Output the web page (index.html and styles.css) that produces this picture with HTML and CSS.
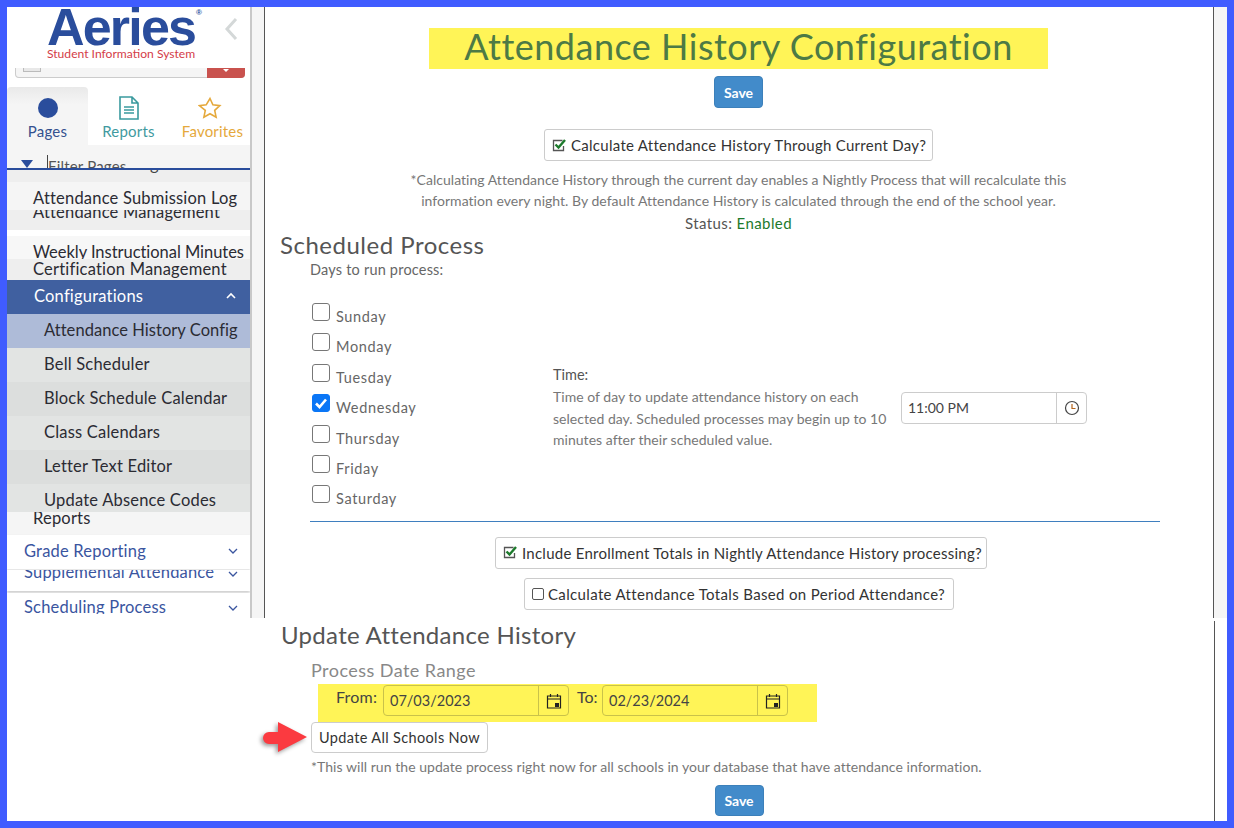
FILE: index.html
```html
<!DOCTYPE html>
<html lang="en">
<head>
<meta charset="utf-8">
<title>Attendance History Configuration</title>
<link rel="stylesheet" href="styles.css">
</head>
<body>
<div class="frame">
  <div class="upper">
    <aside class="sidebar">
      <div class="logo">
        <div class="logo-text">
          <div class="logo-name">Aeries<sup class="reg">®</sup></div>
          <div class="logo-sub">Student Information System</div>
        </div>
        <svg class="collapse" width="14" height="24" viewBox="0 0 14 24"><path d="M12 2 3 12l9 10" fill="none" stroke="#d4d8d8" stroke-width="3"/></svg>
      </div>
      <div class="school-select"><span class="select-chip"></span><span class="select-red"><i class="caret"></i></span></div>
      <div class="tabs">
        <div class="tab tab-pages"><span class="dot"></span><span>Pages</span></div>
        <div class="tab tab-reports">
          <svg width="22" height="24" viewBox="0 0 22 24"><path d="M2 1h12l6 6v16H2z M14 1v6h6" fill="none" stroke="#3a9a9e" stroke-width="1.6"/><path d="M6 11h10M6 14h10M6 17h10" stroke="#3a9a9e" stroke-width="1.6"/></svg>
          <span>Reports</span>
        </div>
        <div class="tab tab-fav">
          <svg width="24" height="24" viewBox="0 0 24 24"><path d="M12 2.5l2.9 6.3 6.9.8-5.1 4.7 1.4 6.8-6.1-3.4-6.1 3.4 1.4-6.8L1.300 9.600l6.900-.8z" fill="none" stroke="#e5a93c" stroke-width="1.600"/></svg>
          <span>Favorites</span>
        </div>
      </div>
      <div class="filter"><i class="tri"></i><span class="filter-text">Filter Pages</span></div>
      <div class="clip-g"><span>g</span></div>
      <div class="row sub-log">Attendance Submission Log</div>
      <div class="row sub-mgmt"><span>Attendance Management</span></div>
      <div class="row sub-week"><span>Weekly Instructional Minutes</span></div>
      <div class="row sub-cert">Certification Management</div>
      <div class="row config">Configurations
        <svg width="12" height="8" viewBox="0 0 12 8"><path d="M2 6l4-4 4 4" fill="none" stroke="#fff" stroke-width="1.600"/></svg>
      </div>
      <div class="row child current">Attendance History Config</div>
      <div class="row child odd">Bell Scheduler</div>
      <div class="row child even">Block Schedule Calendar</div>
      <div class="row child odd">Class Calendars</div>
      <div class="row child even">Letter Text Editor</div>
      <div class="row child odd last">Update Absence Codes</div>
      <div class="row sub-reports"><span>Reports</span></div>
      <div class="row group">Grade Reporting
        <svg width="12" height="8" viewBox="0 0 12 8"><path d="M2 2l4 4 4-4" fill="none" stroke="#3a559f" stroke-width="1.300"/></svg>
      </div>
      <div class="row group supp"><span>Supplemental Attendance</span>
        <svg width="12" height="8" viewBox="0 0 12 8"><path d="M2 2l4 4 4-4" fill="none" stroke="#3a559f" stroke-width="1.300"/></svg>
      </div>
      <div class="row group sched"><span>Scheduling Process</span>
        <svg width="12" height="8" viewBox="0 0 12 8"><path d="M2 2l4 4 4-4" fill="none" stroke="#3a559f" stroke-width="1.300"/></svg>
      </div>
    </aside>
    <main class="main">
      <div class="center">
        <h1 class="title">Attendance History Configuration</h1>
        <button class="btn-save">Save</button>
        <div class="check-btn calc">
          <svg class="ck" width="15" height="15" viewBox="0 0 15 15"><path d="M11.500 8v4.500h-10v-10h9" fill="none" stroke="#555" stroke-width="1.300"/><path d="M3.500 6.500l3 3 6.500-7.500" fill="none" stroke="#1d7a2c" stroke-width="2.400"/></svg>
          Calculate Attendance History Through Current Day?
        </div>
        <p class="note">*Calculating Attendance History through the current day enables a Nightly Process that will recalculate this<br>information every night. By default Attendance History is calculated through the end of the school year.</p>
        <p class="status">Status: <span class="enabled">Enabled</span></p>
      </div>
      <h2 class="h-sched">Scheduled Process</h2>
      <div class="days-label">Days to run process:</div>
      <div class="sched-row">
        <div class="days">
          <div class="day"><i class="box"></i>Sunday</div>
          <div class="day"><i class="box"></i>Monday</div>
          <div class="day"><i class="box"></i>Tuesday</div>
          <div class="day"><i class="box on"><svg width="18" height="18" viewBox="0 0 18 18"><path d="M4 9.500l3.500 3.500 6.500-7.500" fill="none" stroke="#fff" stroke-width="2.600"/></svg></i>Wednesday</div>
          <div class="day"><i class="box"></i>Thursday</div>
          <div class="day"><i class="box"></i>Friday</div>
          <div class="day"><i class="box"></i>Saturday</div>
        </div>
        <div class="time-text">
          <div class="time-label">Time:</div>
          <div class="time-desc">Time of day to update attendance history on each selected day. Scheduled processes may begin up to 10 minutes after their scheduled value.</div>
        </div>
        <div class="input time-input">
          <span class="input-val">11:00 PM</span>
          <span class="addon"><svg width="16" height="16" viewBox="0 0 16 16"><circle cx="8" cy="8" r="6.500" fill="none" stroke="#444" stroke-width="1.200"/><path d="M8 4v4.500h3.500" fill="none" stroke="#b5651d" stroke-width="1.200"/></svg></span>
        </div>
      </div>
      <hr class="rule">
      <div class="center">
        <div class="check-btn incl">
          <svg class="ck" width="15" height="15" viewBox="0 0 15 15"><path d="M11.500 8v4.500h-10v-10h9" fill="none" stroke="#555" stroke-width="1.300"/><path d="M3.500 6.500l3 3 6.500-7.500" fill="none" stroke="#1d7a2c" stroke-width="2.400"/></svg>
          Include Enrollment Totals in Nightly Attendance History processing?
        </div>
        <div class="check-btn period"><i class="mini-box"></i>Calculate Attendance Totals Based on Period Attendance?</div>
      </div>
    </main>
  </div>
  <section class="lower">
    <h2 class="h-update">Update Attendance History</h2>
    <div class="range-label">Process Date Range</div>
    <div class="range">
      <span class="from">From:</span>
      <div class="input date"><span class="input-val">07/03/2023</span><span class="addon"><svg width="16" height="16" viewBox="0 0 16 16"><path d="M1.500 3h13v12h-13zM1.500 6h13M4.500 1v3M11.500 1v3" fill="none" stroke="#222" stroke-width="1.200"/><rect x="9" y="10" width="4" height="4" fill="#222"/></svg></span></div>
      <span class="to">To:</span>
      <div class="input date"><span class="input-val">02/23/2024</span><span class="addon"><svg width="16" height="16" viewBox="0 0 16 16"><path d="M1.500 3h13v12h-13zM1.500 6h13M4.500 1v3M11.500 1v3" fill="none" stroke="#222" stroke-width="1.200"/><rect x="9" y="10" width="4" height="4" fill="#222"/></svg></span></div>
    </div>
    <div class="update-wrap">
      <svg class="arrow" width="46" height="32" viewBox="0 0 46 32"><path d="M7 10H16V0L45 15 16 30V22H7a6 6 0 0 1 0-12z" fill="#fb3a40"/></svg>
      <button class="btn-update">Update All Schools Now</button>
    </div>
    <p class="run-note">*This will run the update process right now for all schools in your database that have attendance information.</p>
    <div class="center"><button class="btn-save bottom">Save</button></div>
  </section>
</div>
</body>
</html>
```
FILE: styles.css
```css
* { box-sizing: border-box; }
html, body { margin: 0; padding: 0; }
body { font-family: Lato, "Open Sans", sans-serif; color: #333; background: #fff; }
.frame { width: 1234px; height: 828px; border: 7px solid #405cff; overflow: hidden; background: #fff; }
.upper { display: flex; height: 611px; background: #f5f5f5; }

.sidebar { width: 245px; flex: none; background: #fff; border-right: 2px solid #c8c8c8; overflow: hidden; font-size: 16.500px; letter-spacing: .2px; }
.logo { height: 61px; display: flex; position: relative; padding-left: 40px; overflow: hidden; }
.logo-name { font-family: "Liberation Sans", sans-serif; font-weight: 700; font-size: 52px; line-height: 40px; height: 39px; color: #2a4d9c; letter-spacing: -1.800px; position: relative; }
.reg { position: absolute; top: 2px; left: 149px; font-size: 8px; line-height: 8px; letter-spacing: 0; }
.logo-sub { font-size: 12.100px; line-height: 14px; color: #d43c48; letter-spacing: 0; margin-top: 1px; }
.collapse { margin: 10px 0 0 29px; }
.school-select { height: 10px; margin: 0 5px 0 8px; background: #f5f5f5; border: 1px solid #ccc; border-top: 0; border-radius: 0 0 4px 4px; display: flex; justify-content: space-between; position: relative; }
.select-chip { width: 18px; height: 4px; margin-left: 7px; background: #e8e8e8; border: 1px solid #bbb; border-top: 0; }
.select-red { width: 38px; height: 10px; margin: 0 -1px 0 0; background: #c9524e; border-radius: 0 0 4px 0; display: flex; justify-content: center; }
.caret { width: 0; height: 0; border: 3px solid transparent; border-top-color: #fff; border-bottom: 0; margin-top: 1px; }

.tabs { display: grid; grid-template-columns: 81px 81px 81px; height: 58px; margin-top: 9px; }
.tab { display: flex; flex-direction: column; align-items: center; justify-content: flex-end; gap: 5px; font-size: 15px; padding-bottom: 5px; letter-spacing: .2px; }
.tab-pages { background: linear-gradient(#e9e9e9, #f5f5f5 30%); border-radius: 4px 4px 0 0; color: #34518f; }
.dot { width: 20px; height: 20px; border-radius: 50%; background: #2a4d9c; margin-bottom: -1px; }
.tab-reports { color: #3f9aa0; }
.tab-reports svg { margin-bottom: -3px; }
.tab-fav { color: #e5a93c; }
.tab-fav svg { margin-bottom: -3px; }
.tab-fav span { margin-left: 6px; }

.filter { height: 25px; background: #f5f5f5; border-bottom: 2px solid #2a4d9c; display: flex; overflow: hidden; padding-left: 14px; }
.tri { width: 0; height: 0; border: 6px solid transparent; border-top: 8px solid #2a4d9c; border-bottom: 0; margin-top: 15px; }
.filter-text { border-left: 1px solid #444; height: 30px; margin: 10px 0 0 14px; line-height: 22px; font-size: 15px; color: #555; }
.clip-g { height: 12px; background: #eee; overflow: hidden; padding-left: 143px; color: #444; }
.clip-g span { display: block; line-height: 20px; margin-top: -16px; }

.row { display: flex; align-items: center; justify-content: space-between; color: #2b2b33; overflow: hidden; white-space: nowrap; }
.sub-log { height: 28px; padding: 4px 0 0 26px; background: #f5f5f5; }
.sub-mgmt { height: 20px; padding-left: 26px; background: #eee; align-items: flex-start; }
.sub-mgmt span { margin-top: -8px; }
.sub-week { height: 23px; padding: 0 0 0 26px; margin-top: 6px; background: #f7f7f7; align-items: flex-start; letter-spacing: -.04px; }
.sub-week span { margin-top: 6px; }
.sub-cert { height: 21px; padding: 0 0 2px 26px; background: #eee; }
.config { height: 34px; padding: 0 13px 2px 27px; background: #4060a0; color: #fff; }
.child { height: 34px; padding: 0 0 2px 37px; }
.current { background: #aebbd8; letter-spacing: .05px; }
.odd { background: #e2e4e3; }
.even { background: #dcdedd; }
.last { height: 28px; align-items: flex-start; padding-top: 6px; }
.sub-reports { height: 23px; padding-left: 26px; background: #f5f5f5; align-items: flex-start; }
.sub-reports span { margin-top: -4px; }
.group { height: 34px; padding: 0 11px 3px 17px; background: #fff; color: #3a559f; box-shadow: 0 1px 2px #ddd; position: relative; }
.supp { height: 21px; align-items: flex-start; margin-top: 1px; box-shadow: 0 2px 3px #ccc; }
.supp span { margin-top: -8px; }
.sched { height: 26px; margin-top: 2px; align-items: flex-start; box-shadow: none; border-bottom: 1px solid #ddd; }
.sched span { margin-top: 4px; height: 17px; overflow: hidden; }
.sched svg { margin-top: 11px; }

.main { flex: 1; margin: 0 13px 0 12px; background: #fff; border-left: 1px solid #555; border-right: 1px solid #555; padding: 21px 1px 0 0; font-size: 14px; min-width: 0; }
.center { display: flex; flex-direction: column; align-items: center; }
.title { width: 619px; height: 41px; margin: 0; background: #fff457; color: #4d7a45; font-size: 36px; font-weight: 400; line-height: 37px; text-align: center; letter-spacing: .5px; }
.btn-save { width: 49px; height: 32px; margin-top: 7px; padding: 0; background: #428bca; border: 1px solid #3c80ba; border-radius: 4px; color: #fff; font: 700 14px Lato, sans-serif; }
.check-btn { display: flex; align-items: center; gap: 4px; height: 32px; border: 1px solid #ccc; border-radius: 3px; background: #fff; font-size: 15px; color: #333; white-space: nowrap; letter-spacing: .28px; padding-left: 7px; }
.calc { width: 389px; margin-top: 21px; }
.note { margin: 8px 0 0; font-size: 14px; line-height: 21px; color: #777; text-align: center; letter-spacing: .03px; }
.status { margin: 0; font-size: 15px; line-height: 25px; color: #555; letter-spacing: .4px; }
.enabled { color: #1d7a2c; }
.h-sched { margin: -5px 0 0 15px; font-size: 24px; font-weight: 400; line-height: 28px; color: #555; letter-spacing: .5px; height: 28px; }
.days-label { margin: 0 0 0 45px; height: 46px; line-height: 22px; font-size: 14.500px; color: #666; letter-spacing: .2px; }
.sched-row { display: flex; align-items: flex-start; padding-left: 47px; }
.days { width: 241px; flex: none; padding-top: 1px; }
.day { display: flex; height: 30.400px; font-size: 14.500px; color: #666; letter-spacing: .65px; line-height: 18px; padding-top: 2px; }
.box { display: block; width: 18px; height: 18px; margin: 0 6px 0 0; border: 1px solid #777; border-radius: 3px; background: #fff; transform: translateY(-5px); }
.on { background: #0a76f6; border-color: #0a76f6; }
.on svg { display: block; margin: -1px; }
.time-text { width: 348px; flex: none; margin-top: 59px; }
.time-label { line-height: 22px; font-size: 14.500px; color: #555; }
.time-desc { width: 340px; line-height: 21.500px; font-size: 14px; letter-spacing: .03px; color: #777; }
.input { display: flex; height: 32px; border: 1px solid #ccc; border-radius: 4px; }
.time-input { width: 186px; margin-top: 87px; background: #fff; font-size: 14px; color: #444; }
.input-val { flex: 1; padding: 0 6px; line-height: 30px; }
.addon { width: 30px; border-left: 1px solid #ccc; display: flex; align-items: center; justify-content: center; }
.rule { margin: 2px 52px 0 45px; border: 0; border-top: 1px solid #3f7fbf; height: 0; }
.incl { width: 492px; margin: 15px 0 0 5px; letter-spacing: .25px; }
.period { width: 430px; margin: 9px 0 0 1px; letter-spacing: .35px; }
.mini-box { width: 12px; height: 12px; border: 1px solid #555; border-radius: 2px; }

.lower { height: 203px; padding-left: 274px; font-size: 14px; position: relative; }
.lower::after { content: ""; position: absolute; top: 3px; bottom: 0; right: 12px; width: 1px; background: #555; }
.h-update { margin: 0; font-size: 24px; font-weight: 400; line-height: 28px; color: #555; letter-spacing: .3px; padding-top: 3px; height: 31px; }
.range-label { font-size: 18px; line-height: 22px; color: #888; letter-spacing: .45px; margin: 10px 0 0 30px; }
.range { display: flex; width: 499px; height: 38px; margin: 3px 0 0 37px; padding: 1px 0 0 18px; background: #fff457; color: #444; }
.from { width: 47px; line-height: 24px; font-size: 16px; letter-spacing: .2px; }
.to { width: 25px; margin-left: 8px; line-height: 24px; font-size: 16px; }
.date { width: 186px; height: 31px; border-color: #c9c24a; border-radius: 4px; font-size: 14.500px; letter-spacing: 0; }
.date .addon { border-color: #c9c24a; }
.update-wrap { position: relative; margin-left: 30px; height: 31px; }
.btn-update { width: 177px; height: 31px; padding: 0; background: #fff; border: 1px solid #ccc; border-radius: 4px; font: 400 14.500px Lato, sans-serif; color: #333; letter-spacing: .35px; }
.arrow { position: absolute; left: -49px; top: 0; filter: drop-shadow(-2px 2px 2px #999); }
.run-note { margin: 4px 0 0 30px; font-size: 14px; line-height: 20px; letter-spacing: .05px; color: #777; }
.lower .center { width: 916px; }
.lower .btn-save { margin-top: 8px; height: 31px; }
```
